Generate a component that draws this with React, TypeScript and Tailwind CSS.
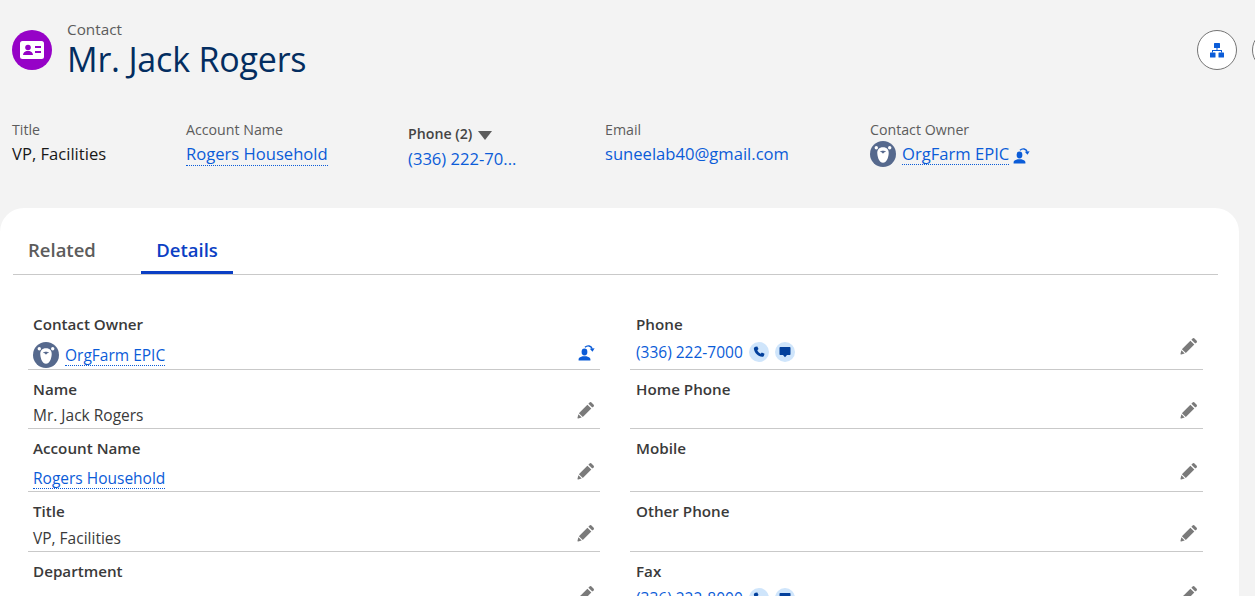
const font = "font-['Open_Sans','Noto_Sans',sans-serif]";

function Bear({ size = 26 }: { size?: number }) {
  return (
    <svg width={size} height={size} viewBox="0 0 26 26" className="shrink-0">
      <circle cx="13" cy="13" r="13" fill="#56698d" />
      <circle cx="6.300" cy="6.800" r="1.700" fill="#fff" />
      <circle cx="19.700" cy="6.800" r="1.700" fill="#fff" />
      <path d="M13 6.300C17 6.300 19 9 18.700 12.500C18.400 17 16.500 21.800 13 21.800C9.500 21.800 7.600 17 7.300 12.500C7 9 9 6.300 13 6.300Z" fill="#fff" />
      <path d="M9.800 11.200C10.500 9.200 15.500 9.200 16.200 11.200C15.200 10.800 14 11.200 13 12.700C12 11.200 10.800 10.800 9.800 11.200Z" fill="#56698d" />
    </svg>
  );
}

function ChangeOwner({ size = 17 }: { size?: number }) {
  return (
    <svg width={size} height={size} viewBox="0 0 17 17" className="shrink-0">
      <ellipse cx="6.500" cy="8" rx="2.900" ry="3.400" fill="#0b5cd8" />
      <path d="M.6 16.400v-1.300c0-1.400 2.600-2.300 3.900-2.800h4c1.300.5 3.900 1.400 3.900 2.800v1.300z" fill="#0b5cd8" />
      <path d="M7 3.300C9.500 .9 13 1.600 14.200 4.800" fill="none" stroke="#0b5cd8" strokeWidth="1.400" />
      <path d="M11.800 4.700l4.800-.4-2.100 3.500z" fill="#0b5cd8" />
    </svg>
  );
}

function Pencil() {
  return (
    <svg width="18" height="18" viewBox="0 0 18 18" className="shrink-0">
      <path d="M12.800 1.300a1 1 0 0 1 1.400 0l2.500 2.500a1 1 0 0 1 0 1.400l-1.400 1.400-3.900-3.900z" fill="#7a7a7a" />
      <path d="M10.400 3.700l3.900 3.900-8.500 8.500-3.900-3.900z" fill="#7a7a7a" />
      <path d="M1.400 13.300l3.300 3.300-3.500 .9a.6.6 0 0 1-.7-.7z" fill="#7a7a7a" />
    </svg>
  );
}

function Hierarchy() {
  return (
    <svg width="16" height="16" viewBox="0 0 16 16" fill="#0b5cd8">
      <rect x="5" y="1" width="6" height="5" rx=".5" />
      <rect x="1" y="10.500" width="5.500" height="5" rx=".5" />
      <rect x="9.500" y="10.500" width="5.500" height="5" rx=".5" />
      <path d="M7.500 6h1v2h4.500v2.500h-1V9H4v1.500H3V8h4.500z" />
    </svg>
  );
}

function RoundAction({ kind }: { kind: "call" | "chat" }) {
  return (
    <span className="w-5 h-5 rounded-full bg-[#cfe5fb] flex items-center justify-center shrink-0">
      {kind === "call" ? (
        <svg width="12" height="12" viewBox="0 0 12 12" fill="#03409c">
          <path d="M2.500 .8 4.300 .4l1.200 2.700-1.200 1.100c.6 1.500 1.800 2.800 3.400 3.500l1.100-1.200 2.700 1.200-.5 1.900c-.2.800-1 1.300-1.800 1.200C5 10.300 1.700 7 .9 2.900.8 1.900 1.500 1 2.500 .8z" />
        </svg>
      ) : (
        <svg width="12" height="12" viewBox="0 0 12 12" fill="#03409c">
          <path d="M1.500 1h9c.6 0 1 .4 1 1v6c0 .6-.4 1-1 1H8L6 11.300 4 9H1.500c-.6 0-1-.4-1-1V2c0-.6.4-1 1-1z" />
        </svg>
      )}
    </span>
  );
}

const Link = ({ children }: { children: React.ReactNode }) => (
  <span className="text-[#0b5cd8] border-b border-dotted border-[#0b5cd8] leading-[20px]">{children}</span>
);

function Highlight({ w, label, children }: { w: string; label: React.ReactNode; children: React.ReactNode }) {
  return (
    <div className={w}>
      <div className="text-[14.200px] leading-[18px] text-[#5c5c5c] h-[18px]">{label}</div>
      <div className="text-[16.600px] leading-[24px] text-[#181818] whitespace-nowrap mt-[3px]">{children}</div>
    </div>
  );
}

function Field({
  h,
  label,
  children,
  icon = <Pencil />,
  iconPad = "pb-[8px]",
  labelPad = "pt-[9px]",
  valuePad = "pb-[1px]",
  indent = "pl-[5px]",
}: {
  h: string;
  label: string;
  children?: React.ReactNode;
  icon?: React.ReactNode;
  iconPad?: string;
  labelPad?: string;
  valuePad?: string;
  indent?: string;
}) {
  return (
    <div className={`${h} border-b border-[#c9c9c9] ${indent} pr-[5px] flex justify-between items-end`}>
      <div className={`${valuePad} min-w-0 self-stretch flex flex-col justify-between`}>
        <div className={`text-[15.200px] leading-[20px] font-semibold text-[#3a3a3a] ${labelPad}`}>{label}</div>
        <div className="text-[15.500px] leading-[22px] text-[#3a3a3a] flex items-center gap-[6px] h-[24px]">{children}</div>
      </div>
      <div className={iconPad}>{icon}</div>
    </div>
  );
}

export default function App() {
  return (
    <div className={`${font} w-[1255px] h-[596px] overflow-hidden bg-[#f3f3f3] relative`}>
      <header className="h-[113px] flex justify-between pl-[12px] pt-[19px]">
        <div className="flex gap-[15px]">
          <div className="mt-[11px] w-10 h-10 rounded-full bg-[#9602c7] flex items-center justify-center">
            <svg width="24" height="18" viewBox="0 0 24 18">
              <rect x="0" y="0" width="24" height="18" rx="2.500" fill="#fff" />
              <circle cx="8" cy="6.500" r="2.800" fill="#9602c7" />
              <path d="M3 14c0-2.500 2-3.500 3.500-4h3c1.500.5 3.500 1.500 3.500 4z" fill="#9602c7" />
              <rect x="15" y="5" width="6" height="2" fill="#9602c7" />
              <rect x="15" y="10" width="6" height="2" fill="#9602c7" />
            </svg>
          </div>
          <div>
            <div className="text-[15.300px] leading-[20px] text-[#5c5c5c]">Contact</div>
            <div className="text-[34px] leading-[41px] text-[#032d60] tracking-[-0.2px]">Mr. Jack Rogers</div>
          </div>
        </div>
        <div className="flex gap-[15px] mt-[11px] -mr-[37px]">
          <div className="w-10 h-10 rounded-full border border-[#747474] bg-white flex items-center justify-center">
            <Hierarchy />
          </div>
          <div className="w-10 h-10 rounded-full border border-[#747474] bg-white" />
        </div>
      </header>

      <section className="h-[95px] flex pl-[12px] pt-[8px]">
        <Highlight w="w-[174px]" label="Title">VP, Facilities</Highlight>
        <Highlight w="w-[222px]" label="Account Name"><Link>Rogers Household</Link></Highlight>
        <div className="w-[197px]">
          <div className="text-[14.200px] leading-[18px] font-semibold text-[#444] flex items-center gap-[6px] h-[20px] mt-[3px]">
            Phone (2)
            <svg width="14" height="9" viewBox="0 0 14 9" className="mt-[2px]"><path d="M0 0h14L7 9z" fill="#5c5c5c" /></svg>
          </div>
          <div className="text-[16.600px] leading-[24px] text-[#0b5cd8] whitespace-nowrap mt-[3px]">(336) 222-70...</div>
        </div>
        <Highlight w="w-[265px]" label="Email"><span className="text-[#0b5cd8]">suneelab40@gmail.com</span></Highlight>
        <div>
          <div className="text-[14.200px] leading-[18px] text-[#5c5c5c]">Contact Owner</div>
          <div className="text-[16.600px] leading-[24px] flex items-center gap-[6px] mt-[2px] text-[#0b5cd8]">
            <Bear />
            <Link>OrgFarm EPIC</Link>
            <span className="-ml-[2px] mt-[2px]"><ChangeOwner /></span>
          </div>
        </div>
      </section>

      <main className="w-[1239px] h-[400px] bg-white rounded-t-[24px] pt-[26px] pl-[13px]">
        <nav className="w-[1205px] h-[41px] border-b border-[#c9c9c9] flex text-[18.500px] font-semibold leading-[32px]">
          <div className="w-[128px] pl-[15px] text-[#5c5c5c]">Related</div>
          <div className="w-[92px] h-[40px] border-b-[3px] border-[#0b3fc4] text-[#0b3fc4] text-center">Details</div>
        </nav>
        <div className="grid grid-cols-[572px_573px] gap-x-[30px] pl-[15px] pt-[35px] -mt-[1px]">
          <div className="flex flex-col">
            <Field h="h-[61px]" label="Contact Owner" icon={<ChangeOwner />} iconPad="pb-[8px]" labelPad="pt-[5px]" valuePad="pb-[2px]">
              <Bear />
              <Link>OrgFarm EPIC</Link>
            </Field>
            <Field h="h-[59px]" label="Name" iconPad="pb-[9px]">Mr. Jack Rogers</Field>
            <Field h="h-[63px]" label="Account Name" iconPad="pb-[11px]"><Link>Rogers Household</Link></Field>
            <Field h="h-[60px]" label="Title" iconPad="pb-[9px]">VP, Facilities</Field>
            <Field h="h-[60px]" label="Department" />
          </div>
          <div className="flex flex-col">
            <Field h="h-[61px]" label="Phone" iconPad="pb-[14px]" labelPad="pt-[5px]" indent="pl-[6px]" valuePad="pb-[5px]">
              <span className="text-[#0b5cd8]">(336) 222-7000</span>
              <span className="flex gap-[6px]"><RoundAction kind="call" /><RoundAction kind="chat" /></span>
            </Field>
            <Field h="h-[59px]" label="Home Phone" indent="pl-[6px]" iconPad="pb-[9px]" />
            <Field h="h-[63px]" label="Mobile" indent="pl-[6px]" iconPad="pb-[11px]" />
            <Field h="h-[60px]" label="Other Phone" indent="pl-[6px]" iconPad="pb-[9px]" />
            <Field h="h-[60px]" label="Fax" iconPad="pb-[8px]" indent="pl-[6px]" valuePad="pb-[1px]">
              <span className="text-[#0b5cd8]">(336) 222-8000</span>
              <span className="flex gap-[6px]"><RoundAction kind="call" /><RoundAction kind="chat" /></span>
            </Field>
          </div>
        </div>
      </main>
    </div>
  );
}
